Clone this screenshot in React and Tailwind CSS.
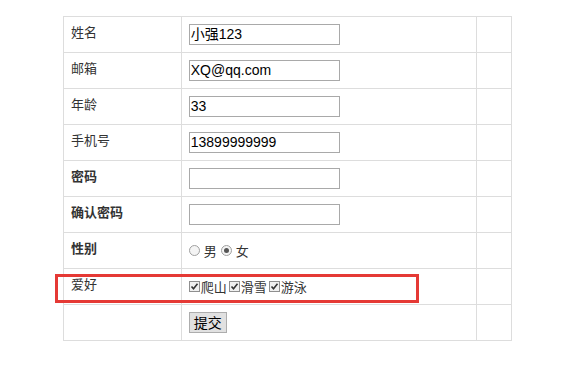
import React from 'react';

const font = { fontFamily: '"Liberation Sans", "Noto Sans CJK SC", sans-serif' };
const cjk = { fontFamily: '"Noto Sans CJK SC", "Liberation Sans", sans-serif' };

function Radio({ checked }) {
  return (
    <span className="inline-flex h-[11px] w-[11px] items-center justify-center rounded-full border border-[#a0a0a0] bg-[#f4f4f4]">
      {checked && <span className="h-[5px] w-[5px] rounded-full bg-[#555]" />}
    </span>
  );
}

function Check() {
  return (
    <span className="inline-flex h-[11px] w-[11px] items-center justify-center border border-[#8f8f8f] bg-[#f0f0f0]">
      <svg width="9" height="9" viewBox="0 0 9 9">
        <path d="M1.5 4.5 L3.5 6.8 L7.5 1.8" fill="none" stroke="#333" strokeWidth="1.6" />
      </svg>
    </span>
  );
}

function TextInput({ value }) {
  return (
    <div className="flex h-[21px] w-[151px] items-center border border-[#a9a9a9] bg-white px-[1px] text-[14px] text-black">
      {value}
    </div>
  );
}

function Row({ label, bold, children }) {
  return (
    <div className="flex h-[36px] border-b border-[#ddd]">
      <div className={`flex w-[118px] items-center border-r border-[#ddd] pl-[7px] pb-[4px] text-[13px] text-[#333] ${bold ? 'font-bold' : ''}`}>
        {label}
      </div>
      <div className="flex w-[296px] items-center border-r border-[#ddd] pl-[7px]">{children}</div>
      <div className="w-[34px]" />
    </div>
  );
}

export default function App() {
  return (
    <div className="relative h-[371px] w-[572px] bg-white" style={font}>
      <div className="pl-[63px] pt-[16px]">
        <div className="w-[449px] border-x border-t border-[#ddd]">
          <Row label="姓名"><TextInput value="小强123" /></Row>
          <Row label="邮箱"><TextInput value="XQ@qq.com" /></Row>
          <Row label="年龄"><TextInput value="33" /></Row>
          <Row label="手机号"><TextInput value="13899999999" /></Row>
          <Row label="密码" bold><TextInput value="" /></Row>
          <Row label="确认密码" bold><TextInput value="" /></Row>
          <Row label="性别" bold>
            <div className="flex items-center text-[13px] text-[#333]" style={cjk}>
              <span className="flex"><Radio /></span>
              <span className="ml-[4px]">男</span>
              <span className="ml-[4px] flex"><Radio checked /></span>
              <span className="ml-[4px]">女</span>
            </div>
          </Row>
          <Row label="爱好">
            <div className="flex items-center text-[13px] text-[#333]" style={cjk}>
              <span className="flex"><Check /></span>
              <span className="ml-[1px]">爬山</span>
              <span className="ml-[2px] flex"><Check /></span>
              <span className="ml-[1px]">滑雪</span>
              <span className="ml-[2px] flex"><Check /></span>
              <span className="ml-[1px]">游泳</span>
            </div>
          </Row>
          <Row label="">
            <button className="h-[21px] w-[38px] border border-[#adadad] bg-[#e1e1e1] text-[14px] text-black">提交</button>
          </Row>
        </div>
      </div>
      <div className="absolute left-[55px] top-[274px] h-[29px] w-[364px] border-[3px] border-[#e53935]" />
    </div>
  );
}
